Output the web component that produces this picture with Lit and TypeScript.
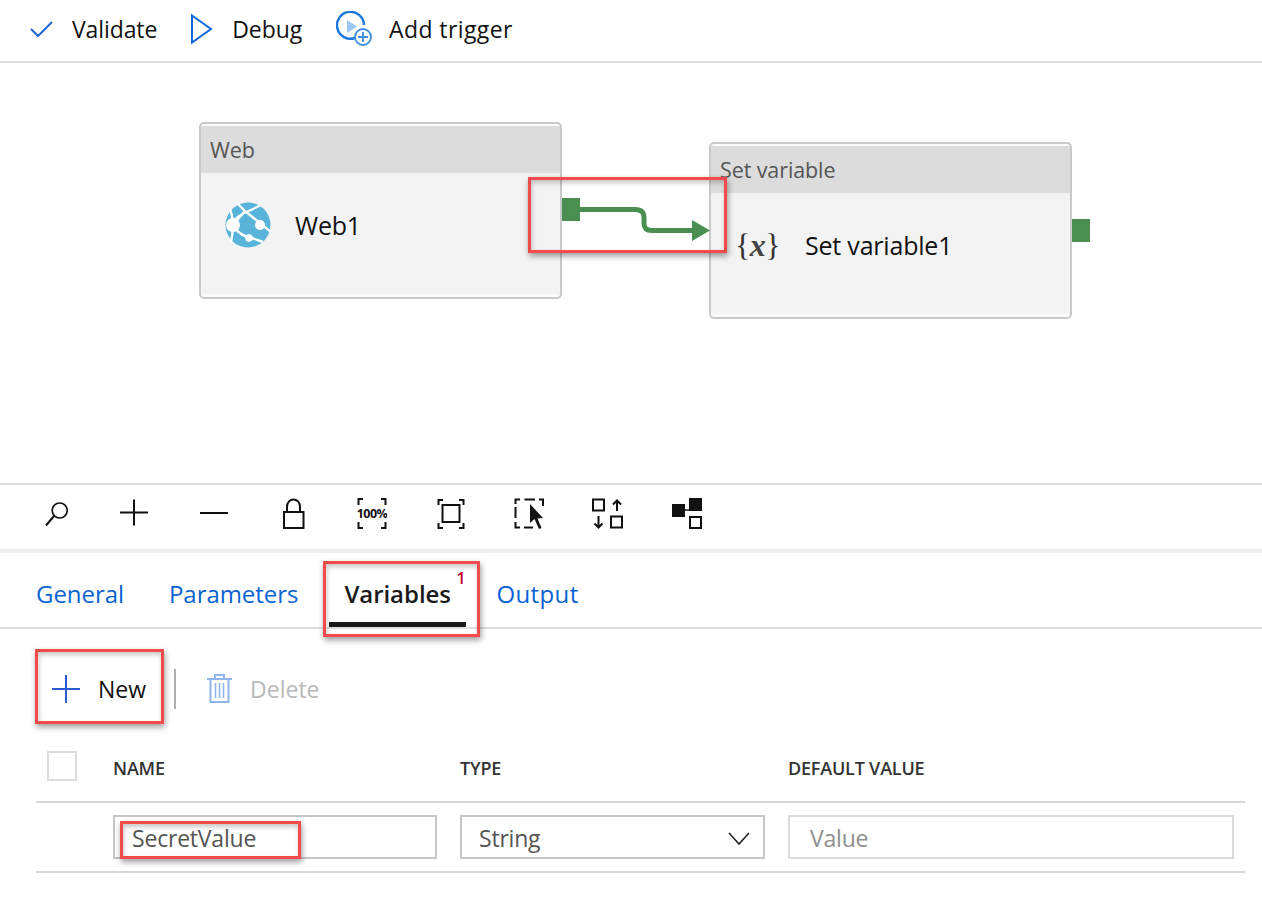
import { LitElement, html, css, svg } from "lit";
import { customElement } from "lit/decorators.js";

@customElement("app-root")
export class AppRoot extends LitElement {
  static styles = css`
    :host {
      display: block;
      position: relative;
      width: 1262px;
      height: 905px;
      background: #fff;
      overflow: hidden;
      font-family: "Open Sans", "Noto Sans", sans-serif;
      color: #111;
    }
    svg {
      display: block;
      flex: none;
    }

    .toolbar {
      height: 63px;
      box-sizing: border-box;
      border-bottom: 2px solid #dedede;
      display: flex;
      align-items: center;
      padding: 0 0 4px 29px;
      font-size: 23px;
      letter-spacing: -0.1px;
    }
    .tool {
      display: flex;
      align-items: center;
    }
    .tool.validate {
      gap: 19px;
      margin-right: 32px;
    }
    .tool.debug {
      gap: 19px;
      margin-right: 34px;
    }
    .tool.trigger {
      gap: 15px;
      letter-spacing: 0.4px;
    }

    .canvas {
      position: relative;
      height: 422px;
      box-sizing: border-box;
      border-bottom: 2px solid #dedede;
    }
    .node {
      position: absolute;
      width: 363px;
      height: 177px;
      box-sizing: border-box;
      border: 2px solid #c9c9c9;
      border-radius: 5px;
      padding: 2px 0 3px;
      background: #fbfbfb;
      display: flex;
      flex-direction: column;
    }
    .node.web {
      left: 199px;
      top: 59px;
    }
    .node.setvar {
      left: 709px;
      top: 79px;
    }
    .node-head {
      height: 47px;
      background: #dcdcdc;
      color: #555;
      font-size: 21.5px;
      letter-spacing: -0.1px;
      display: flex;
      align-items: center;
      padding-left: 9px;
      flex: none;
    }
    .node-body {
      display: flex;
      align-items: center;
      flex: 1;
      box-sizing: border-box;
      background: #f3f3f3;
      font-size: 25px;
      letter-spacing: -0.2px;
    }
    .web .node-body {
      padding: 0 0 17px 24px;
      gap: 24px;
    }
    .setvar .node-body {
      padding: 0 0 17px 24px;
      gap: 25px;
    }
    .fx {
      font-family: "Liberation Serif", serif;
      font-size: 32px;
      color: #333;
      letter-spacing: -0.6px;
      width: 45px;
      white-space: nowrap;
    }
    .fx i {
      font-weight: bold;
      color: #444;
    }
    .port {
      position: absolute;
      width: 18px;
      height: 23px;
      background: #498f52;
    }
    .port.web {
      left: 562px;
      top: 135px;
    }
    .port.setvar {
      left: 1072px;
      top: 156px;
    }
    .link {
      position: absolute;
      left: 580px;
      top: 135px;
    }

    .zoombar {
      height: 64px;
      box-sizing: border-box;
      display: flex;
      align-items: center;
      padding: 0 0 7px 17.5px;
    }
    .zoombar .cell {
      width: 78.75px;
      display: flex;
      justify-content: center;
    }
    .thick {
      height: 4px;
      background: #eeeeee;
    }

    .tabs {
      height: 76px;
      box-sizing: border-box;
      border-bottom: 2px solid #dedede;
      display: flex;
      align-items: flex-start;
      padding-left: 36px;
      font-size: 24px;
      letter-spacing: -0.05px;
      color: #0a63d2;
    }
    .tab {
      display: flex;
      align-items: center;
      padding-top: 6px;
      box-sizing: border-box;
      height: 74px;
    }
    .tab.general {
      margin-right: 45px;
    }
    .tab.params {
      margin-right: 31px;
    }
    .tab.active {
      position: relative;
      width: 137px;
      height: 74px;
      padding-top: 11px;
      padding-left: 15px;
      margin-right: 30px;
      color: #1a1a1a;
      font-weight: 600;
      letter-spacing: -0.05px;
      border-bottom: 5px solid #1a1a1a;
    }
    .tab.output {
      letter-spacing: 0.4px;
    }
    .badge {
      position: absolute;
      left: 127px;
      top: 14px;
      font-size: 16px;
      font-weight: 600;
      color: #c4002b;
      letter-spacing: 0;
    }

    .actions {
      height: 119px;
      box-sizing: border-box;
      display: flex;
      align-items: center;
      padding: 0 0 0 52px;
      font-size: 23px;
    }
    .actions .new {
      display: flex;
      align-items: center;
      gap: 18px;
    }
    .actions .sep {
      width: 2px;
      height: 40px;
      background: #aeaeae;
      margin: 0 31px 0 28px;
    }
    .actions .delete {
      display: flex;
      align-items: center;
      gap: 18px;
      color: #b9b9b9;
    }

    .table {
      margin: 0 17px 0 36px;
    }
    .row {
      display: grid;
      grid-template-columns: 77px 347px 328px 1fr;
      align-items: center;
    }
    .row.head {
      height: 55px;
      box-sizing: border-box;
      border-bottom: 2px solid #d8d8d8;
      font-size: 18px;
      font-weight: 600;
      color: #333;
      letter-spacing: -0.2px;
      padding-bottom: 14px;
    }
    .row.body {
      height: 70px;
      box-sizing: border-box;
      border-bottom: 2px solid #d8d8d8;
    }
    .check {
      width: 30px;
      height: 30px;
      box-sizing: border-box;
      border: 2px solid #dcdcdc;
      margin: 0 0 4px 11px;
    }
    .field {
      height: 44px;
      box-sizing: border-box;
      border: 2px solid #c6c6c6;
      display: flex;
      align-items: center;
      justify-content: space-between;
      padding: 2px 13px 0 17px;
      font-size: 23px;
      letter-spacing: -0.2px;
      color: #555;
    }
    .field.name {
      width: 324px;
    }
    .field.type {
      width: 305px;
    }
    .field.value {
      width: 446px;
      border-color: #dadada;
      padding-left: 20px;
      color: #8f8f8f;
    }

    .mark {
      position: absolute;
      box-sizing: border-box;
      border: 3px solid #f34b4b;
      box-shadow: 1px 3px 6px rgba(0, 0, 0, 0.4), inset 1px 3px 5px rgba(0, 0, 0, 0.22);
      pointer-events: none;
    }
    .mark.link-mark {
      left: 528px;
      top: 177px;
      width: 199px;
      height: 76px;
    }
    .mark.tab-mark {
      left: 323px;
      top: 561px;
      width: 157px;
      height: 76px;
    }
    .mark.new-mark {
      left: 35px;
      top: 649px;
      width: 129px;
      height: 75px;
    }
    .mark.name-mark {
      left: 120px;
      top: 821px;
      width: 181px;
      height: 38px;
    }
  `;

  private webIcon() {
    return html`<svg width="46" height="46" viewBox="0 0 46 46">
      <circle cx="23" cy="23" r="22.5" fill="#59b4d9" />
      <g fill="none" stroke="#fff" stroke-width="2.4">
        <path d="M13 2 L20 9 L46 30" />
        <path d="M8 20 C12 14 18 11 26 8 L36 3" />
        <path d="M9 25 C14 32 20 35 27 36 L38 40" />
        <path d="M6 40 C7 34 8 30 8 23 C8 16 6 10 5 7" />
        <path d="M20 9 L8 23" />
      </g>
      <circle cx="8" cy="23" r="7" fill="#fff" />
      <circle cx="35" cy="23" r="5" fill="#fff" />
      <circle cx="24" cy="36" r="3.8" fill="#fff" />
    </svg>`;
  }

  private zoomIcons() {
    const ic = (body: unknown, w = 30, h = 32) =>
      html`<div class="cell"><svg width=${w} height=${h} viewBox="0 0 ${w} ${h}" fill="none" stroke="#111" stroke-width="2">${body}</svg></div>`;
    return [
      ic(svg`<circle cx="17.7" cy="12.5" r="7.5" stroke-width="1.7" /><path d="M12 18 L4 27.5" stroke-width="2" />`),
      ic(svg`<path d="M14 1.5 V27.5 M0 14.5 H28" />`, 32),
      ic(svg`<path d="M0 15 H28" />`, 28),
      ic(svg`<path d="M5 14 V9 C5 -1 18 -1 18 9 V14" /><rect x="2" y="14" width="19.5" height="16" />`, 23),
      ic(svg`<path d="M6 2 H1.5 V8 M1.5 25 V31 H6 M24 2 H28.5 V8 M28.5 25 V31 H24" /><text x="15" y="20.8" text-anchor="middle" font-family="Open Sans" font-size="12.5" font-weight="700" letter-spacing="-0.5" fill="#111" stroke="none">100%</text>`, 30, 33),
      ic(svg`<path d="M6 2 H1.5 V7 M1.5 25 V30 H6 M22 2 H26.5 V7 M26.5 25 V30 H22" /><rect x="5.5" y="7" width="17" height="17" />`, 28, 32),
      ic(svg`<path d="M1.5 6 V1.5 H6 M10.5 1.5 H21 M25 1.5 H29 V8 M1.5 9 V20 M1.5 24 V29.5 H6 M10 29.5 H19" /><path d="M16 6 L16 25 L20.5 21 L25 31 L27.5 30 L23.5 20.5 L29 20 Z" fill="#111" stroke="none" />`),
      ic(svg`<rect x="1" y="1.5" width="11" height="11" /><rect x="19" y="18.5" width="11" height="11" /><path d="M25 13 V3 M21 6.5 L25 2.5 L29 6.5 M6.5 18 V29 M2.5 25.5 L6.5 29.5 L10.5 25.5" />`, 32, 32),
      ic(svg`<rect x="0" y="6" width="13" height="13" fill="#111" stroke="none" /><rect x="17" y="0" width="13" height="13" fill="#111" stroke="none" /><path d="M13 12 H17" stroke-width="1.5" /><rect x="18" y="19" width="11" height="11" />`, 30, 32),
    ];
  }

  render() {
    return html`
      <div class="toolbar">
        <div class="tool validate">
          <svg width="24" height="20" viewBox="0 0 24 20" fill="none" stroke="#1f66d4" stroke-width="2"><path d="M2 10 L9 17 L23 3" /></svg>
          <span>Validate</span>
        </div>
        <div class="tool debug">
          <svg width="24" height="32" viewBox="0 0 24 32" fill="none" stroke="#1268d8" stroke-width="2"><path d="M3 2.5 L22 16 L3 29.5 Z" fill="#fff" /></svg>
          <span>Debug</span>
        </div>
        <div class="tool trigger">
          <svg width="38" height="36" viewBox="0 0 38 36" fill="none">
            <path d="M19 27 A13.5 13.5 0 1 1 28 14" stroke="#1e78dc" stroke-width="2.4" />
            <path d="M11 9 L21 15.5 L11 22 Z" fill="#9cc7f3" />
            <circle cx="27" cy="26" r="8" stroke="#3d8ee4" stroke-width="1.8" fill="#fff" />
            <path d="M22 26 H32 M27 21 V31" stroke="#3d8ee4" stroke-width="1.8" />
          </svg>
          <span>Add trigger</span>
        </div>
      </div>

      <div class="canvas">
        <div class="node web">
          <div class="node-head">Web</div>
          <div class="node-body">${this.webIcon()}<span>Web1</span></div>
        </div>
        <div class="node setvar">
          <div class="node-head">Set variable</div>
          <div class="node-body">
            <span class="fx">{<i>x</i>}</span>
            <span>Set variable1</span>
          </div>
        </div>
        <div class="port web"></div>
        <div class="port setvar"></div>
        <svg class="link" width="130" height="46" viewBox="0 0 130 46" fill="none">
          <path d="M0 11.5 H55 C62 11.5 64 15 64 20 V25 C64 30 66 32.5 72 32.5 H114" stroke="#498f52" stroke-width="5" />
          <path d="M112 22 L130 32.5 L112 43 Z" fill="#498f52" />
        </svg>
      </div>

      <div class="zoombar">${this.zoomIcons()}</div>
      <div class="thick"></div>

      <div class="tabs">
        <div class="tab general">General</div>
        <div class="tab params">Parameters</div>
        <div class="tab active">Variables<span class="badge">1</span></div>
        <div class="tab output">Output</div>
      </div>

      <div class="actions">
        <div class="new">
          <svg width="28" height="28" viewBox="0 0 28 28" fill="none" stroke="#2d59cf" stroke-width="2"><path d="M14 0 V28 M0 14 H28" /></svg>
          <span>New</span>
        </div>
        <div class="sep"></div>
        <div class="delete">
          <svg width="25" height="29" viewBox="0 0 25 29" fill="none" stroke="#8fb6ea" stroke-width="2">
            <path d="M0 5 H25 M8 5 V1 H17 V5 M3.5 5 V28 H21.5 V5" />
            <path d="M8.5 9 V24 M12.5 9 V24 M16.5 9 V24" stroke-width="1.6" />
          </svg>
          <span>Delete</span>
        </div>
      </div>

      <div class="table">
        <div class="row head">
          <div><div class="check"></div></div>
          <div>NAME</div>
          <div>TYPE</div>
          <div>DEFAULT VALUE</div>
        </div>
        <div class="row body">
          <div></div>
          <div class="field name">SecretValue</div>
          <div class="field type">
            <span>String</span>
            <svg width="22" height="13" viewBox="0 0 22 13" fill="none" stroke="#222" stroke-width="1.6"><path d="M1 1 L11 12 L21 1" /></svg>
          </div>
          <div class="field value">Value</div>
        </div>
      </div>

      <div class="mark link-mark"></div>
      <div class="mark tab-mark"></div>
      <div class="mark new-mark"></div>
      <div class="mark name-mark"></div>
    `;
  }
}
